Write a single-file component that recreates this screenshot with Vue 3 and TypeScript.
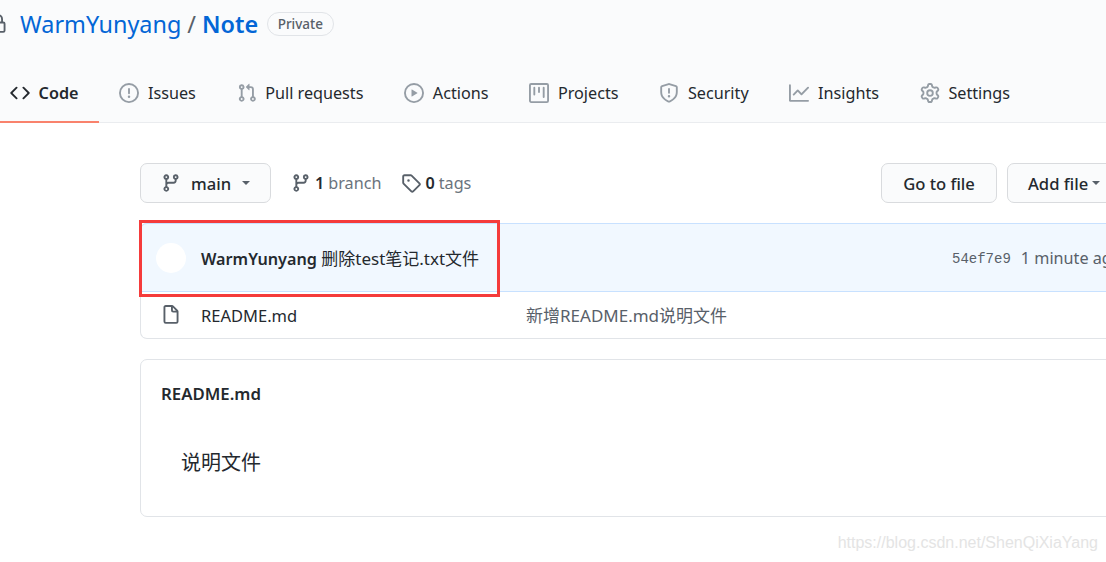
<template>
  <div class="page">
    <header class="repo-head">
      <div class="title-row">
        <svg class="icon lock" viewBox="0 0 16 16"><path :d="icons.lock" /></svg>
        <a class="owner">WarmYunyang</a>
        <span class="slash">/</span>
        <a class="name">Note</a>
        <span class="badge">Private</span>
      </div>
      <nav class="tabs">
        <a v-for="tab in tabs" :key="tab.label" class="tab" :class="{ active: tab.active }">
          <svg class="icon" viewBox="0 0 16 16"><path :d="tab.icon" /></svg>
          <span>{{ tab.label }}</span>
        </a>
      </nav>
    </header>

    <main class="content">
      <div class="toolbar">
        <button class="btn branch-btn">
          <svg class="icon" viewBox="0 0 16 16"><path :d="icons.branch" /></svg>
          <span>main</span>
          <i class="caret"></i>
        </button>
        <a class="count branch-count">
          <svg class="icon" viewBox="0 0 16 16"><path :d="icons.branch" /></svg>
          <b>1</b> branch
        </a>
        <a class="count">
          <svg class="icon" viewBox="0 0 16 16"><path :d="icons.tag" /></svg>
          <b>0</b> tags
        </a>
        <button class="btn goto-btn">Go to file</button>
        <button class="btn add-btn">Add file <i class="caret"></i></button>
      </div>

      <section class="files">
        <div class="commit">
          <div class="avatar"></div>
          <div class="commit-msg"><b>WarmYunyang</b> 删除test笔记.txt文件</div>
          <code class="sha">54ef7e9</code>
          <span class="age">1 minute ago</span>
        </div>
        <div class="file-row">
          <svg class="icon file-icon" viewBox="0 0 16 16"><path :d="icons.file" /></svg>
          <span class="file-name">README.md</span>
          <span class="file-msg">新增README.md说明文件</span>
        </div>
      </section>

      <section class="readme">
        <h2>README.md</h2>
        <p>说明文件</p>
      </section>
    </main>

    <div class="highlight"></div>
    <div class="watermark">https://blog.csdn.net/ShenQiXiaYang</div>
  </div>
</template>

<script setup lang="ts">
interface Tab {
  label: string;
  icon: string;
  active?: boolean;
}

const icons = {
  lock: 'M4 4v2h-.25A1.75 1.75 0 002 7.75v5.5c0 .966.784 1.75 1.75 1.75h8.5A1.75 1.75 0 0014 13.25v-5.5A1.75 1.75 0 0012.25 6H12V4a4 4 0 10-8 0zm6.5 2V4a2.5 2.5 0 00-5 0v2h5zM12 7.5h.25a.25.25 0 01.25.25v5.5a.25.25 0 01-.25.25h-8.5a.25.25 0 01-.25-.25v-5.5a.25.25 0 01.25-.25H12z',
  branch: 'M11.75 2.5a.75.75 0 100 1.5.75.75 0 000-1.5zm-2.25.75a2.25 2.25 0 113 2.122V6A2.5 2.5 0 0110 8.5H6a1 1 0 00-1 1v1.128a2.251 2.251 0 11-1.5 0V5.372a2.25 2.25 0 111.5 0v1.836A2.492 2.492 0 016 7h4a1 1 0 001-1v-.628A2.25 2.25 0 019.5 3.25zM4.25 12a.75.75 0 100 1.5.75.75 0 000-1.5zM3.5 3.25a.75.75 0 111.5 0 .75.75 0 01-1.5 0z',
  tag: 'M2.5 7.775V2.75a.25.25 0 01.25-.25h5.025a.25.25 0 01.177.073l6.25 6.25a.25.25 0 010 .354l-5.025 5.025a.25.25 0 01-.354 0l-6.25-6.25a.25.25 0 01-.073-.177zm-1.5 0V2.75C1 1.784 1.784 1 2.75 1h5.025c.464 0 .91.184 1.238.513l6.25 6.25a1.75 1.75 0 010 2.474l-5.026 5.026a1.75 1.75 0 01-2.474 0l-6.25-6.25A1.75 1.75 0 011 7.775zM6 5a1 1 0 100 2 1 1 0 000-2z',
  file: 'M3.75 1.5a.25.25 0 00-.25.25v11.5c0 .138.112.25.25.25h8.5a.25.25 0 00.25-.25V6H9.75A1.75 1.75 0 018 4.25V1.5H3.75zm5.75.56v2.19c0 .138.112.25.25.25h2.19L9.5 2.06zM2 1.75C2 .784 2.784 0 3.75 0h5.086c.464 0 .909.184 1.237.513l3.414 3.414c.329.328.513.773.513 1.237v8.086A1.75 1.75 0 0112.25 15h-8.5A1.75 1.75 0 012 13.25V1.75z',
};

const tabs: Tab[] = [
  {
    label: 'Code',
    active: true,
    icon: 'M4.72 3.22a.75.75 0 011.06 1.06L2.06 8l3.72 3.72a.75.75 0 11-1.06 1.06L.47 8.53a.75.75 0 010-1.06l4.25-4.25zm6.56 0a.75.75 0 10-1.06 1.06L13.94 8l-3.72 3.72a.75.75 0 101.06 1.06l4.25-4.25a.75.75 0 000-1.06l-4.25-4.25z',
  },
  {
    label: 'Issues',
    icon: 'M8 1.5a6.5 6.5 0 100 13 6.5 6.5 0 000-13zM0 8a8 8 0 1116 0A8 8 0 010 8zm9 3a1 1 0 11-2 0 1 1 0 012 0zm-.25-6.25a.75.75 0 00-1.5 0v3.5a.75.75 0 001.5 0v-3.5z',
  },
  {
    label: 'Pull requests',
    icon: 'M7.177 3.073L9.573.677A.25.25 0 0110 .854v4.792a.25.25 0 01-.427.177L7.177 3.427a.25.25 0 010-.354zM3.75 2.5a.75.75 0 100 1.5.75.75 0 000-1.5zm-2.25.75a2.25 2.25 0 113 2.122v5.256a2.251 2.251 0 11-1.5 0V5.372A2.25 2.25 0 011.5 3.25zM11 2.5h-1V4h1a1 1 0 011 1v5.628a2.251 2.251 0 101.5 0V5A2.5 2.5 0 0011 2.5zm1 10.25a.75.75 0 111.5 0 .75.75 0 01-1.5 0zM3.75 12a.75.75 0 100 1.5.75.75 0 000-1.5z',
  },
  {
    label: 'Actions',
    icon: 'M1.5 8a6.5 6.5 0 1113 0 6.5 6.5 0 01-13 0zM8 0a8 8 0 100 16A8 8 0 008 0zM6.379 5.227A.25.25 0 006 5.442v5.117a.25.25 0 00.379.214l4.264-2.559a.25.25 0 000-.428L6.379 5.227z',
  },
  {
    label: 'Projects',
    icon: 'M1.75 0A1.75 1.75 0 000 1.75v12.5C0 15.216.784 16 1.75 16h12.5A1.75 1.75 0 0016 14.25V1.75A1.75 1.75 0 0014.25 0H1.75zM1.5 1.75a.25.25 0 01.25-.25h12.5a.25.25 0 01.25.25v12.5a.25.25 0 01-.25.25H1.75a.25.25 0 01-.25-.25V1.75zM11.75 3a.75.75 0 00-.75.75v7.5a.75.75 0 001.5 0v-7.5a.75.75 0 00-.75-.75zm-8.25.75a.75.75 0 011.5 0v5.5a.75.75 0 01-1.5 0v-5.5zM8 3a.75.75 0 00-.75.75v3.5a.75.75 0 001.5 0v-3.5A.75.75 0 008 3z',
  },
  {
    label: 'Security',
    icon: 'M7.467.133a1.75 1.75 0 011.066 0l5.25 1.68A1.75 1.75 0 0115 3.48V7c0 1.566-.32 3.182-1.303 4.682-.983 1.498-2.585 2.813-5.032 3.855a1.7 1.7 0 01-1.33 0c-2.447-1.042-4.049-2.357-5.032-3.855C1.32 10.182 1 8.566 1 7V3.48a1.75 1.75 0 011.217-1.667l5.25-1.68zm.61 1.429a.25.25 0 00-.153 0l-5.25 1.68a.25.25 0 00-.174.238V7c0 1.358.275 2.666 1.057 3.86.784 1.194 2.121 2.34 4.366 3.297a.2.2 0 00.154 0c2.245-.956 3.582-2.104 4.366-3.298C13.225 9.666 13.5 8.36 13.5 7V3.48a.25.25 0 00-.174-.237l-5.25-1.68zM9 10.5a1 1 0 11-2 0 1 1 0 012 0zm-.25-5.75a.75.75 0 10-1.5 0v3a.75.75 0 001.5 0v-3z',
  },
  {
    label: 'Insights',
    icon: 'M1.5 1.75a.75.75 0 00-1.5 0v12.5c0 .414.336.75.75.75h14.5a.75.75 0 000-1.5H1.5V1.75zm14.28 2.53a.75.75 0 00-1.06-1.06L10 7.94 7.53 5.47a.75.75 0 00-1.06 0L3.22 8.72a.75.75 0 001.06 1.06L7 7.06l2.47 2.47a.75.75 0 001.06 0l5.25-5.25z',
  },
  {
    label: 'Settings',
    icon: 'M7.429 1.525a6.593 6.593 0 011.142 0c.036.003.108.036.137.146l.289 1.105c.147.56.55.967.997 1.189.174.086.341.183.501.29.417.278.97.423 1.53.27l1.102-.303c.11-.03.175.016.195.046.219.31.41.641.573.989.014.031.022.11-.059.19l-.815.806c-.411.406-.562.957-.53 1.456a4.588 4.588 0 010 .582c-.032.499.119 1.05.53 1.456l.815.806c.08.08.073.159.059.19a6.494 6.494 0 01-.573.99c-.02.029-.086.074-.195.045l-1.103-.303c-.559-.153-1.112-.008-1.529.27-.16.107-.327.204-.5.29-.449.222-.851.628-.998 1.189l-.289 1.105c-.029.11-.101.143-.137.146a6.613 6.613 0 01-1.142 0c-.036-.003-.108-.037-.137-.146l-.289-1.105c-.147-.56-.55-.967-.997-1.189a4.502 4.502 0 01-.501-.29c-.417-.278-.97-.423-1.53-.27l-1.102.303c-.11.03-.175-.016-.195-.046a6.492 6.492 0 01-.573-.989c-.014-.031-.022-.11.059-.19l.815-.806c.411-.406.562-.957.53-1.456a4.587 4.587 0 010-.582c.032-.499-.119-1.05-.53-1.456l-.815-.806c-.08-.08-.073-.159-.059-.19a6.44 6.44 0 01.573-.99c.02-.029.086-.075.195-.045l1.103.303c.559.153 1.112.008 1.529-.27.16-.107.327-.204.5-.29.449-.222.851-.628.998-1.189l.289-1.105c.029-.11.101-.143.137-.146zM8 0c-.236 0-.47.01-.701.03-.743.065-1.29.615-1.458 1.261l-.29 1.106c-.017.066-.078.158-.211.224a5.994 5.994 0 00-.668.386c-.123.082-.233.09-.3.071L3.27 2.776c-.644-.177-1.392.02-1.82.63a7.977 7.977 0 00-.704 1.217c-.315.675-.111 1.422.363 1.891l.815.806c.05.048.098.147.088.294a6.084 6.084 0 000 .772c.01.147-.038.246-.088.294l-.815.806c-.474.469-.678 1.216-.363 1.891.2.428.436.835.704 1.218.428.609 1.176.806 1.82.63l1.103-.303c.066-.019.176-.011.299.071.213.143.436.272.668.386.133.066.194.158.212.224l.289 1.106c.169.646.715 1.196 1.458 1.26a8.094 8.094 0 001.402 0c.743-.064 1.29-.614 1.458-1.26l.29-1.106c.017-.066.078-.158.211-.224a5.98 5.98 0 00.668-.386c.123-.082.233-.09.3-.071l1.102.302c.644.177 1.392-.02 1.82-.63.268-.382.505-.789.704-1.217.315-.675.111-1.422-.364-1.891l-.814-.806c-.05-.048-.098-.147-.088-.294a6.1 6.1 0 000-.772c-.01-.147.039-.246.088-.294l.814-.806c.475-.469.679-1.216.364-1.891a7.992 7.992 0 00-.704-1.218c-.428-.609-1.176-.806-1.82-.63l-1.103.303c-.066.019-.176.011-.299-.071a5.991 5.991 0 00-.668-.386c-.133-.066-.194-.158-.212-.224L10.16 1.29C9.99.645 9.444.095 8.701.031A8.094 8.094 0 008 0zm1.5 8a1.5 1.5 0 11-3 0 1.5 1.5 0 013 0zM11 8a3 3 0 11-6 0 3 3 0 016 0z',
  },
];
</script>

<style>
html,
body {
  margin: 0;
  background: #fff;
  overflow: hidden;
}
</style>

<style scoped>
.page {
  position: relative;
  width: 1106px;
  height: 562px;
  overflow: hidden;
  background: #fff;
  color: #24292e;
  font-family: 'Noto Sans', 'Noto Sans CJK SC', sans-serif;
  font-size: 16.2px;
}

.icon {
  width: 20px;
  height: 20px;
  flex: none;
  fill: #959da5;
  fill-rule: evenodd;
}

.repo-head {
  height: 122px;
  background: #fafbfc;
  border-bottom: 1px solid #eaecef;
}

.title-row {
  display: flex;
  align-items: center;
  height: 48px;
  padding-left: 20px;
}

.lock {
  margin-left: -32px;
  margin-right: 12px;
  fill: #586069;
}

.owner,
.name {
  color: #0366d6;
  font-size: 23.4px;
}

.name {
  font-weight: 600;
}

.slash {
  margin: 0 6px;
  color: #586069;
  font-size: 23.4px;
}

.badge {
  margin-left: 9px;
  padding: 0 9.5px;
  height: 22px;
  line-height: 22px;
  border: 1px solid #e1e4e8;
  border-radius: 14px;
  color: #586069;
  font-size: 13.5px;
  font-weight: 500;
}

.tabs {
  display: flex;
  height: 74px;
}

.tab {
  display: flex;
  align-items: center;
  gap: 8.6px;
  padding: 17px 20.4px 0;
  box-sizing: border-box;
  height: 75px;
  border-bottom: 2px solid transparent;
}

.tab.active {
  padding-left: 10px;
  border-bottom-color: #f9826c;
  font-weight: 600;
}

.tab.active .icon {
  fill: #24292e;
}

.content {
  width: 1060px;
  margin-left: 140px;
  padding-top: 40px;
}

.toolbar {
  display: flex;
  align-items: center;
  height: 40px;
}

.btn {
  display: flex;
  align-items: center;
  justify-content: center;
  box-sizing: border-box;
  height: 40px;
  padding: 0;
  background: #fafbfc;
  border: 1px solid #d9dbde;
  border-radius: 7px;
  color: #24292e;
  font: inherit;
  font-size: 16.6px;
  font-weight: 500;
}

.branch-btn {
  width: 131px;
  justify-content: flex-start;
  gap: 10px;
  padding-left: 20px;
}

.branch-btn .icon {
  fill: #586069;
}

.caret {
  display: inline-block;
  border: 4.5px solid transparent;
  border-top-color: #586069;
  border-bottom: 0;
}

.branch-btn .caret {
  margin-left: 1px;
}

.count {
  display: flex;
  align-items: center;
  gap: 4px;
  margin-left: 20px;
  color: #6a737d;
}

.count b {
  color: #24292e;
  font-weight: 600;
}

.count .icon {
  margin-top: -1px;
  fill: #586069;
}

.goto-btn {
  width: 116px;
  margin-left: auto;
}

.add-btn {
  width: 193px;
  margin-left: 10px;
  justify-content: flex-start;
  padding-left: 20px;
  white-space: pre;
}

.files {
  margin-top: 20px;
  border: 1px solid #e1e4e8;
  border-top: 0;
  border-radius: 7px;
}

.commit {
  display: flex;
  align-items: center;
  box-sizing: border-box;
  height: 69px;
  padding-left: 15px;
  background: #f1f8ff;
  border: 1px solid #c8e1ff;
  border-radius: 7px 7px 0 0;
  margin: 0 -1px;
}

.avatar {
  width: 30px;
  height: 30px;
  border-radius: 50%;
  background: #fff;
}

.commit-msg {
  margin-left: 15px;
  margin-top: -1px;
  width: 751px;
  color: #24292e;
  font-size: 17px;
}

.commit-msg b {
  font-size: 16.2px;
  font-weight: 600;
}

.sha {
  margin-top: 2px;
  color: #586069;
  font-family: 'Liberation Mono', monospace;
  font-size: 14px;
}

.age {
  margin-left: 10px;
  color: #586069;
}

.file-row {
  display: flex;
  align-items: center;
  height: 46px;
  padding-left: 20px;
}

.file-icon {
  fill: #586069;
}

.file-name {
  margin-left: 20px;
  width: 325px;
  font-size: 16.5px;
}

.file-msg {
  margin-top: -2px;
  color: #586069;
  font-size: 17px;
}

.readme {
  box-sizing: border-box;
  height: 158px;
  margin-top: 20px;
  padding: 21px 20px 20px;
  border: 1px solid #e1e4e8;
  border-radius: 7px;
}

.readme h2 {
  margin: 0;
  font-size: 16.8px;
  font-weight: 600;
  line-height: 26px;
}

.readme p {
  margin: 41px 0 0 20px;
  font-size: 20px;
  line-height: 30px;
}

.highlight {
  position: absolute;
  left: 139px;
  top: 220px;
  width: 361px;
  height: 77px;
  box-sizing: border-box;
  border: 3px solid #f53b3b;
}

.watermark {
  position: absolute;
  right: 8px;
  top: 534px;
  color: #e4e4e4;
  font-family: 'Liberation Sans', sans-serif;
  font-size: 16px;
}
</style>
